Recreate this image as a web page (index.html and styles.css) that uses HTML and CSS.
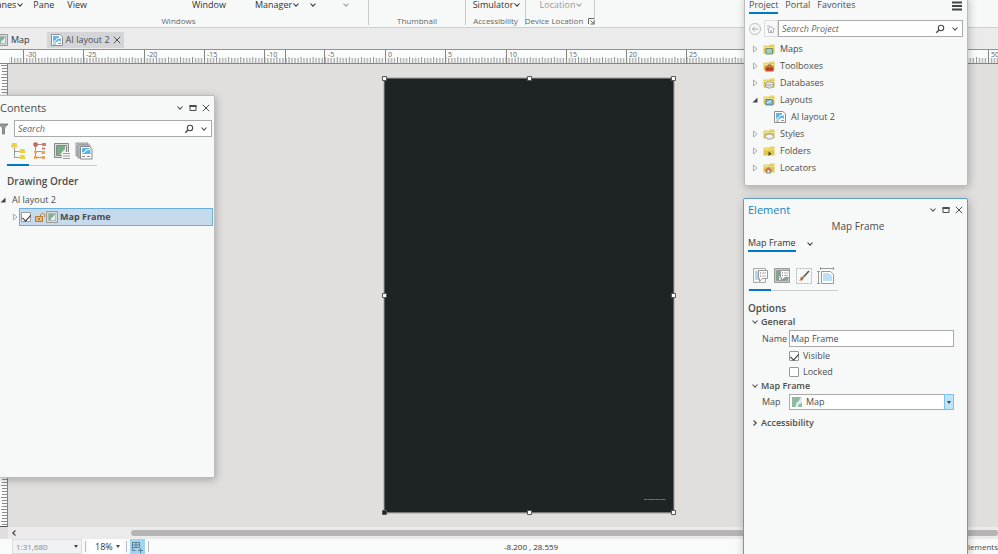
FILE: index.html
```html
<!DOCTYPE html>
<html lang="en">
<head>
<meta charset="utf-8">
<title>AI layout 2</title>
<link rel="stylesheet" href="styles.css">
</head>
<body>
<svg class="defs" aria-hidden="true">
  <defs>
    <symbol id="chev" viewBox="0 0 8 8"><path d="M1.500 2.500 4 5.200 6.500 2.500" fill="none" stroke="currentColor" stroke-width="1.100"/></symbol>
    <symbol id="chev-right" viewBox="0 0 8 8"><path d="M2.500 1.500 5.200 4 2.500 6.500" fill="none" stroke="currentColor" stroke-width="1.200"/></symbol>
    <symbol id="close" viewBox="0 0 8 8"><path d="M.8.800l6.400 6.400M7.200.8.800 7.200" fill="none" stroke="currentColor"/></symbol>
    <symbol id="restore" viewBox="0 0 8 8"><path d="M1 1.500h6v5H1z" fill="none" stroke="currentColor"/><path d="M.5 1h7v2h-7z" fill="currentColor"/></symbol>
    <symbol id="lens" viewBox="0 0 10 10"><circle cx="6" cy="4" r="2.700" fill="none" stroke="currentColor" stroke-width="1.100"/><path d="M4 6 1.300 8.800" stroke="currentColor" stroke-width="1.500"/></symbol>
    <symbol id="tri" viewBox="0 0 6 8"><path d="M1.500 1v6L5 4z" fill="none" stroke="#999" stroke-width=".8"/></symbol>
    <symbol id="tri-open" viewBox="0 0 6 8"><path d="M5.500 1.500v5h-5z" fill="#444"/></symbol>
    <symbol id="map" viewBox="0 0 12 12"><path d="M1 1h10v10H1z" fill="#d9ebf5"/><path d="M1 1h9L8 4.500 6.500 6 5 7.500 4.500 11H1z" fill="#8dbb9b"/><path d="M7.500 8.500 11 7v4H7z" fill="#8cc19a"/></symbol>
    <symbol id="mapframe" viewBox="0 0 12 12"><path d="M.5.5h11v11H.5z" fill="#d5d9d9" stroke="#999"/><path d="M2.500 2.500h7v7h-7z" fill="#e4eff4" stroke="#999" stroke-width=".6"/><path d="M3 3h6L7 6 5 7v2H3z" fill="#7fb290"/></symbol>
    <symbol id="layout" viewBox="0 0 12 12"><path d="M.5.5h8.500l2.500 2.500v8.500H.5z" fill="#fff" stroke="#8d8d8d"/><path d="M2 2h6v2l2 .5V8L8 6.500 5 8.500H2z" fill="#65b5e7"/><path d="M2.500 7.500 5 6.500 6 4.500 9 4" fill="none" stroke="#fff"/><path d="M2 10h3M7 9.500h3" stroke="#999"/></symbol>
    <symbol id="folder" viewBox="0 0 12 12"><path d="M.5 10.500V2.500H6l1-1h4.500v9z" fill="#dfc84f"/><path d="M.5 4.500h11" stroke="#f0e28c"/><path d="M1 3h5l1-1h4" stroke="#f6efad" fill="none" stroke-width=".7"/></symbol>
  </defs>
</svg>

<div class="app">
  <header class="ribbon">
    <section class="group windows">
      <div class="commands">
        <button>Panes<svg><use href="#chev"/></svg></button>
        <button>Pane</button>
        <button class="view">View</button>
        <button class="push">Window</button>
        <button class="push-sm">Manager<svg><use href="#chev"/></svg></button>
        <button aria-label="More"><svg><use href="#chev"/></svg></button>
        <button class="muted last" aria-label="More"><svg><use href="#chev"/></svg></button>
      </div>
      <h2>Windows</h2>
    </section>
    <section class="group thumb"><h2>Thumbnail</h2></section>
    <section class="group access">
      <div class="commands"><button>Simulator<svg><use href="#chev"/></svg></button></div>
      <h2>Accessibility</h2>
    </section>
    <section class="group device">
      <div class="commands"><button class="muted">Location<svg><use href="#chev"/></svg></button></div>
      <h2>Device Location <svg viewBox="0 0 8 8"><path d="M1.500 7V1.500H7M3.500 3.500l3 3M3.500 7H7V3.500" fill="none" stroke="#666"/></svg></h2>
    </section>
  </header>

  <nav class="tabs">
    <a class="tab map-tab" href="#"><svg><use href="#mapframe"/></svg>Map</a>
    <div class="tab active"><svg><use href="#layout"/></svg><a href="#">AI layout 2</a><button aria-label="Close tab"><svg><use href="#close"/></svg></button></div>
  </nav>

  <svg class="ruler-x">
    <defs>
      <pattern id="tx" x="385" width="12.06" height="14" patternUnits="userSpaceOnUse"><path d="M.5 7v6M3.500 8v5M6.500 8v5M9.500 8v5" stroke="#8c8c8c"/></pattern>
    </defs>
    <rect x="9" width="100%" height="14" fill="url(#tx)"/>
    <path d="M23.500 0v14M83.500 0v14M144.500 0v14M204.500 0v14M264.500 0v14M285.500 0v14M324.500 0v14M385.500 0v14M445.500 0v14M506.500 0v14M566.500 0v14M626.500 0v14M686.500 0v14M988.500 0v14" stroke="#858585"/>
    <g><text x="26" y="7">-30</text><text x="86" y="7">-25</text><text x="147" y="7">-20</text><text x="207" y="7">-15</text><text x="267" y="7">-10</text><text x="328" y="7">-5</text><text x="388" y="7">0</text><text x="448" y="7">5</text><text x="509" y="7">10</text><text x="569" y="7">15</text><text x="629" y="7">20</text><text x="689" y="7">25</text><text x="991" y="7">50</text></g>
  </svg>

  <main class="workspace">
    <svg class="ruler-y">
      <defs><pattern id="ty" y="1" width="8" height="12" patternUnits="userSpaceOnUse"><path d="M1 .5h7M2 3.500h5M2 6.500h6M2 9.500h5" stroke="#8c8c8c"/></pattern></defs>
      <rect width="8" height="100%" fill="url(#ty)"/>
    </svg>
    <div class="canvas">
      <svg class="sheet" viewBox="0 0 296 442">
        <path d="M4 4h290v435H4z" fill="#1e2326" stroke="#a0a0a0"/>
        <path d="M4 438.500h290" stroke="#777"/>
        <path d="M264 425.500h22" stroke="#8c9092" stroke-width=".8" stroke-dasharray="3 .6 2 .5"/>
        <g fill="#fff" stroke="#555"><path d="M2.500 2.500h4v4h-4zM147.500 2.500h4v4h-4zM291.500 2.500h4v4h-4zM2.500 219.500h4v4h-4zM291.500 219.500h4v4h-4zM147.500 436.500h4v4h-4zM291.500 436.500h4v4h-4z"/><path d="M2.500 436.500h4v4h-4z" fill="#222"/></g>
      </svg>
    </div>
  </main>

  <div class="scroll"><button aria-label="Scroll left"><svg><use href="#chev-right"/></svg></button><div class="thumb-bar"></div></div>

  <footer class="status">
    <button class="scale">1:31,680<i></i></button>
    <span class="sep"></span>
    <button class="percent">18%<i></i></button>
    <span class="sep"></span>
    <button class="snap" aria-label="Snapping"><svg viewBox="0 0 14 14"><path d="M2.500 2.500h7v5h-7zM6 2.500v5M2.500 5h7M2.500 7.500v3h3M8 10.500h5M10.500 8v5" fill="none" stroke="#63808f"/></svg></button>
    <span class="sep"></span>
    <output>-8.200 , 28.559</output>
    <span class="selected">Elements</span>
  </footer>
</div>

<aside class="panel contents">
  <header><h1>Contents</h1><div class="winbtns"><button aria-label="Menu"><svg><use href="#chev"/></svg></button><button aria-label="Restore"><svg><use href="#restore"/></svg></button><button aria-label="Close"><svg><use href="#close"/></svg></button></div></header>
  <div class="searchrow">
    <svg class="filter" viewBox="0 0 10 12"><path d="M0 1h9L5.500 5v6H3.500V5z" fill="#999" stroke="#666" stroke-width=".7"/></svg>
    <div class="search"><input aria-label="Search" placeholder="Search"><svg class="lens"><use href="#lens"/></svg><svg><use href="#chev"/></svg></div>
  </div>
  <div class="icons">
    <button aria-label="Drawing order"><svg viewBox="0 0 18 18"><path d="M5.500 6v9.500h5M5.500 9.500h5" fill="none" stroke="#999"/><g fill="#e8d247"><path d="M3 1h4.500l1 4.500H2zM11 7h4.500l1 4h-6zM11 13h4.500l1 4h-6z"/></g></svg></button>
    <button aria-label="Element type"><svg viewBox="0 0 18 18"><path d="M4.500 3v12.500h6M4.500 9.500h6M5 2.500h8" fill="none" stroke="#999"/><path d="M3 1h3v3H3z" fill="#d97a6a" stroke="#ba4c3d"/><path d="M11 1h4v3h-4z" fill="#d97a6a"/><path d="M11 5.500h3v2h-3z" fill="#d97a6a"/><path d="M10.500 9h3.500v3h-3.500zM10.500 14h3.500v3h-3.500zM3 9h3v2H3zM3 14h3v3H3z" fill="#e5a768"/></svg></button>
    <button aria-label="Map frames"><svg viewBox="0 0 18 18"><path d="M1.500 1.500h14v14h-14z" fill="#ddd" stroke="#888"/><path d="M3.500 3.500h10v10h-10z" fill="#dcecf4" stroke="#888"/><path d="M4 4h8v3l-3 3-2 3H4z" fill="#76ae88"/><path d="M9 10h9v8H9z" fill="#f7f9f8"/><path d="M10 11.500h7M10 14h7M10 16.500h7" stroke="#999"/></svg></button>
    <button aria-label="Layouts"><svg viewBox="0 0 18 18"><path d="M1 1h12v2H3v11H1z" fill="#ccc" stroke="#888" stroke-width=".8"/><path d="M3 3h12v2H5v11H3z" fill="#ccc" stroke="#888" stroke-width=".8"/><path d="M5.500 4.500h9l2.500 2.500v10H5.500z" fill="#fff" stroke="#888"/><path d="M7 6h7l1.500 1.500V12H7z" fill="#5ab1e8"/><path d="M7 11l3-1 1-2 4-.5" fill="none" stroke="#fff"/><path d="M7 14.500h3M12 14.500h3" stroke="#888"/></svg></button>
  </div>
  <h3>Drawing Order</h3>
  <div class="treeroot"><svg class="tri"><use href="#tri-open"/></svg>AI layout 2</div>
  <div class="treeitem"><svg class="tri"><use href="#tri"/></svg>
    <div class="selrow"><input type="checkbox" id="frame-on" checked><svg class="lock" viewBox="0 0 12 12"><path d="M1.500 5.500h7v5h-7z" fill="#eab877" stroke="#b5793a"/><path d="M6.500 5.500V3.500q2-3 4 0V6" fill="none" stroke="#b87f43"/><path d="M5 7v2" stroke="#704617"/></svg><svg><use href="#mapframe"/></svg><label for="frame-on">Map Frame</label></div>
  </div>
</aside>

<aside class="panel project">
  <nav><a class="on" href="#">Project</a><a href="#">Portal</a><a href="#">Favorites</a><button aria-label="Menu"><svg viewBox="0 0 10 10"><path d="M0 1.500h10M0 5h10M0 8.500h10" stroke="#444" stroke-width="2"/></svg></button></nav>
  <div class="searchrow">
    <button aria-label="Back"><svg viewBox="0 0 12 12"><circle cx="6" cy="6" r="5.500" fill="none" stroke="#bbb"/><path d="M9.500 6h-6M6 3.500 3.500 6 6 8.500" fill="none" stroke="#aaa"/></svg></button>
    <button class="home" aria-label="Home"><svg viewBox="0 0 12 12"><path d="M2 6.500l4-3 4 3M3.500 6v3.500h5V6M2 3h3M5.500 9.500v-2h1v2" fill="none" stroke="#b5b5b5"/></svg></button>
    <div class="search"><input aria-label="Search Project" placeholder="Search Project"><svg class="lens"><use href="#lens"/></svg><svg><use href="#chev"/></svg></div>
  </div>
  <ul>
    <li><svg class="tri"><use href="#tri"/></svg><svg viewBox="0 0 12 12"><use href="#folder"/><path d="M3 5.500h6.500v5.500H3z" fill="#9ed3b1" stroke="#657b70" stroke-width=".8"/></svg>Maps</li>
    <li><svg class="tri"><use href="#tri"/></svg><svg viewBox="0 0 12 12"><use href="#folder"/><path d="M2.500 6.500h8V11.500h-8z" fill="#ce4c31"/><path d="M5 6.500V5h3v1.500M2.500 9h8" fill="none" stroke="#873322" stroke-width=".8"/></svg>Toolboxes</li>
    <li><svg class="tri"><use href="#tri"/></svg><svg viewBox="0 0 12 12"><use href="#folder"/><path d="M2.500 6.500v3.500q4 2.500 8 0V6.500z" fill="#dcdcdc" stroke="#888" stroke-width=".7"/><ellipse cx="6.500" cy="6.500" rx="4" ry="1.500" fill="#eee" stroke="#888" stroke-width=".7"/></svg>Databases</li>
    <li><svg class="tri"><use href="#tri-open"/></svg><svg viewBox="0 0 12 12"><use href="#folder"/><path d="M3 5.500h5l2 1.500v4H3z" fill="#79bce6" stroke="#666" stroke-width=".8"/><path d="M4 9l4-2" stroke="#fff"/></svg>Layouts</li>
    <li class="child"><svg><use href="#layout"/></svg>AI layout 2</li>
    <li><svg class="tri"><use href="#tri"/></svg><svg viewBox="0 0 12 12"><use href="#folder"/><path d="M2 8.500 4.500 6h4L11 8.500 8.500 11h-4z" fill="#f2f2f2" stroke="#888" stroke-width=".8"/></svg>Styles</li>
    <li><svg class="tri"><use href="#tri"/></svg><svg viewBox="0 0 12 12"><use href="#folder"/><path d="M5.500 6.500v4.500l3-2.200z" fill="#444"/></svg>Folders</li>
    <li><svg class="tri"><use href="#tri"/></svg><svg viewBox="0 0 12 12"><use href="#folder"/><path d="M2 8 5.500 5 9 8l-1 2.500H3z" fill="#df674f"/><path d="M4.500 8h2v3h-2z" fill="#eee"/><path d="M3 11h5" stroke="#4ba8a2"/></svg>Locators</li>
  </ul>
</aside>

<aside class="panel element">
  <header><h1>Element</h1><div class="winbtns"><button aria-label="Menu"><svg><use href="#chev"/></svg></button><button aria-label="Restore"><svg><use href="#restore"/></svg></button><button aria-label="Close"><svg><use href="#close"/></svg></button></div></header>
  <p class="subtitle">Map Frame</p>
  <div class="kind"><a href="#">Map Frame</a><svg><use href="#chev"/></svg></div>
  <div class="icons">
    <button aria-label="Options"><svg viewBox="0 0 18 18"><path d="M2.500 1.500h12v14h-12z" fill="#f1f7fa" stroke="#aaa"/><path d="M4 4h4v9H4z" fill="#abd9f3"/><path d="M7.500 3.500h9v8h-5l-3 3v-3h-1z" fill="#fff" stroke="#999"/><path d="M9 6h1M9 9h1" stroke="#7b5b91"/><path d="M11 6h4M11 9h4" stroke="#aaa"/></svg></button>
    <button aria-label="Display"><svg viewBox="0 0 18 18"><path d="M1.500 1.500h15v14h-15z" fill="#c5c8c6" stroke="#999"/><path d="M3.500 3.500h11v10h-11z" fill="#c8e7ef" stroke="#999"/><path d="M4 4h3v4l-1 2v3H4zM9 12l5-2v3H9z" fill="#74ac85"/><path d="M7.500 3.500h9v7h-5l-3 3v-3h-1z" fill="#fff" stroke="#999"/><path d="M9 6h1M9 8.500h1" stroke="#7b5b91"/><path d="M11 6h4M11 8.500h4" stroke="#aaa"/></svg></button>
    <button aria-label="Border"><svg viewBox="0 0 18 18"><path d="M1.500 1.500h15v15h-15z" fill="none" stroke="#b5b5b5" stroke-dasharray="2 1"/><path d="M14 4 8.500 10" stroke="#555" stroke-width="1.500"/><path d="M7.500 9.500l1.500 1.500-2 2.500H4q2-1 1.500-3z" fill="#b36b36"/></svg></button>
    <button aria-label="Placement"><svg viewBox="0 0 18 18"><path d="M3 1.500h14M3.500 0v3M16.500 0v3M1.500 4v13M0 4.500h3M0 16.500h3" stroke="#999"/><path d="M4.500 4.500h9l3 3v9h-12z" fill="#fff" stroke="#999"/><path d="M6 6h6l3 3v5H6z" fill="#bce0f4"/></svg></button>
  </div>
  <h3>Options</h3>
  <h4><svg><use href="#chev"/></svg>General</h4>
  <div class="form">
    <label for="name">Name</label><input id="name" type="text" value="Map Frame">
    <div class="check"><input id="visible" type="checkbox" checked><label for="visible">Visible</label></div>
    <div class="check"><input id="locked" type="checkbox"><label for="locked">Locked</label></div>
  </div>
  <h4><svg><use href="#chev"/></svg>Map Frame</h4>
  <div class="form">
    <label for="mapsel">Map</label>
    <div class="combo"><svg><use href="#map"/></svg><select id="mapsel"><option>Map</option></select><span><i></i></span></div>
  </div>
  <h4 class="closed"><svg><use href="#chev-right"/></svg>Accessibility</h4>
</aside>
</body>
</html>
```
FILE: styles.css
```css
* { box-sizing: border-box; }
body { margin: 0; overflow: hidden; font: 9px/12px "Open Sans", "Noto Sans", sans-serif; color: #4c4c4c; background: #f7f9f8; }
button, input, select { font: inherit; color: inherit; margin: 0; padding: 0; border: 0; background: none; }
button { display: flex; align-items: center; white-space: nowrap; }
a { color: inherit; text-decoration: none; }
h1, h2, h3, h4, p, ul { margin: 0; padding: 0; font-weight: 400; font-size: inherit; }
svg { display: block; flex: none; width: 8px; height: 8px; }
i { width: 0; height: 0; border: 2px solid transparent; border-top: 3px solid #444; border-bottom: 0; }
.defs { position: absolute; width: 0; height: 0; }

.app { display: flex; flex-direction: column; height: 100vh; background: #e0dfde; }

.ribbon { display: flex; height: 28px; background: #f7f9f8; border-bottom: 1px solid #cfcfcf; }
.group { display: flex; flex-direction: column; justify-content: space-between; height: 25px; border-right: 1px solid #c8c8c8; }
.commands { display: flex; align-items: center; height: 10px; line-height: 10px; color: #333; }
.group h2 { display: flex; justify-content: center; align-items: center; gap: 4px; margin-top: auto; font-size: 8px; line-height: 9px; white-space: nowrap; color: #666; }
.windows { width: 369px; }
.windows h2 { padding-right: 11px; }
.windows .commands { gap: 9px; margin-left: -9px; }
.view { margin-left: 4px; }
.push { margin-left: 96px; }
.push-sm { margin-left: 20px; }
.windows .last { margin-left: 16px; }
.thumb { width: 97px; }
.access { width: 60px; }
.device { width: 69px; }
.access .commands, .device .commands { justify-content: center; padding-left: 3px; }
.commands .muted { color: #999; }

.tabs { display: flex; align-items: flex-end; gap: 17px; height: 21px; padding-bottom: 1px; background: #ebebeb; }
.tab { display: flex; align-items: center; gap: 3px; height: 16px; }
.tab > svg { width: 12px; height: 12px; }
.map-tab { margin-left: -4px; color: #333; }
.active { padding: 0 3px 0 4px; background: #d4d5d8; }

.ruler-x { width: 100%; height: 15px; background: #fafbfb; border-top: 1px solid #929292; border-bottom: 1px solid #858585; }
.ruler-x text { font: 7px "Open Sans", sans-serif; fill: #666; }

.workspace { display: flex; flex: 1; min-height: 0; }
.ruler-y { width: 8px; height: 100%; background: #fafbfb; border-right: 1px solid #858585; border-bottom: 1px solid #555; }
.canvas { position: relative; flex: 1; overflow: hidden; }
.sheet { position: absolute; left: 372px; top: 10px; width: 296px; height: 442px; }

.scroll { display: flex; align-items: center; height: 12px; margin-left: 8px; background: #ebebeb; }
.scroll button { width: 123px; padding-left: 2px; }
.scroll button svg { transform: scaleX(-1); }
.thumb-bar { flex: 1; height: 6px; border-radius: 3px; background: #b4b4b4; }

.status { display: flex; align-items: center; gap: 3px; height: 15px; padding-left: 12px; background: #f9fafa; }
.status button { height: 15px; justify-content: space-between; }
.status .scale { width: 70px; padding: 0 3px; font-size: 8px; background: #f1f2f3; border: 1px solid #ddd; color: #888; }
.status .percent { width: 34px; padding: 0 3px 0 6px; background: #fff; color: #333; }
.sep { width: 1px; height: 11px; background: #bbb; }
.snap { width: 15px; background: #9fd5f3; }
.snap svg { width: 14px; height: 14px; }
.status output { flex: 1; padding-left: 352px; font-size: 8px; color: #333; }
.selected { font-size: 8px; }

.panel { position: absolute; background: #f7f9f8; border: 1px solid #bcbcbc; border-radius: 2px; box-shadow: 1px 2px 8px rgba(0, 0, 0, .25); }
.panel header { display: flex; justify-content: space-between; align-items: center; }
.panel h1 { font-size: 11px; line-height: 14px; }
.winbtns { display: flex; gap: 5px; }
.searchrow { display: flex; align-items: center; }
.search { display: flex; flex: 1; align-items: center; gap: 6px; height: 17px; padding: 0 3px; border: 1px solid #aaa; background: #fff; }
.search input { flex: 1; min-width: 0; outline: 0; font-style: italic; }
.search input::placeholder { color: #666; opacity: 1; }
.lens { width: 10px; height: 10px; }
.icons { display: flex; width: 90px; border-bottom: 1px solid #ccc; }
.icons button { justify-content: center; width: 22px; height: 27px; padding-bottom: 1px; }
.icons button:first-child { box-shadow: 0 1px #0078c8, inset 0 -1px #0078c8; }
.icons svg { width: 18px; height: 18px; }
.panel h3 { font-size: 10px; line-height: 14px; font-weight: 600; }

input[type="checkbox"] { appearance: none; width: 10px; height: 10px; border: 1px solid #999; border-radius: 1px; background: #fff; display: grid; place-items: center; }
input[type="checkbox"]:checked::before { content: ""; width: 4px; height: 7px; border: solid #333; border-width: 0 1px 1px 0; transform: rotate(42deg); }

.contents { left: -2px; top: 95px; width: 217px; height: 383px; padding: 5px 2px 0 1px; }
.contents header { padding-right: 2px; }
.contents .searchrow { gap: 5px; margin-top: 5px; margin-left: -1px; }
.filter { width: 10px; height: 12px; }
.contents .icons { margin: 1px 0 0 7px; }
.contents h3 { margin: 8px 0 0 7px; }
.treeroot { display: flex; align-items: center; gap: 6px; margin-top: 6px; height: 12px; }
.contents .tri { width: 6px; }
.treeitem { display: flex; align-items: center; gap: 1px; margin: 2px -1px 0 12px; }
.selrow { display: flex; flex: 1; align-items: center; gap: 2px; height: 18px; padding-left: 1px; background: #c5dbed; border: 1px solid #69b1dc; font-weight: 700; }
.selrow svg { width: 12px; height: 12px; }
.selrow .lock { margin-right: -2px; margin-left: 1px; }

.project { right: 30px; top: -4px; width: 224px; height: 190px; padding: 2px 4px 0; }
.project nav { display: flex; align-items: flex-start; gap: 7px; height: 21px; }
.project nav a { height: 15px; line-height: 12px; }
.project nav .on { border-bottom: 2px solid #0078c8; }
.project nav button { margin: 2px 1px 0 auto; }
.project nav svg { width: 10px; height: 10px; }
.project .searchrow { gap: 3px; }
.project .searchrow button svg { width: 12px; height: 12px; }
.home { height: 17px; border: 1px solid #ddd; }
.home + .search { margin-left: -3px; }
.project ul { margin-top: 3px; list-style: none; }
.project li { display: flex; align-items: center; gap: 5px; height: 17px; padding-left: 3px; }
.project li svg { width: 12px; height: 12px; }
.project li .tri { width: 6px; height: 8px; }
.project .child { padding-left: 25px; }

.element { right: 30px; top: 198px; bottom: -4px; width: 225px; padding: 4px 4px 0; border: 1px solid #5f9fc6; }
.element h1 { color: #1583c9; }
.subtitle { margin-top: 2px; padding-left: 5px; font-size: 10px; line-height: 15px; text-align: center; }
.kind { display: flex; align-items: center; gap: 10px; margin-top: 2px; color: #333; }
.kind a { border-bottom: 2px solid #0078c8; line-height: 14px; }
.element .icons { margin-top: 11px; padding-left: 1px; }
.element h3 { margin-top: 10px; }
.element h4 { display: flex; align-items: center; gap: 2px; height: 14px; padding-left: 3px; font-weight: 600; }
.form { display: grid; grid-template-columns: 27px 1fr; align-items: center; row-gap: 1px; padding: 1px 9px 0 14px; }
.form input[type="text"] { height: 17px; padding-left: 1px; border: 1px solid #aaa; background: #fff; width: 100%; }
.check { display: flex; grid-column: 2; align-items: center; gap: 4px; height: 15px; }
.combo { display: flex; align-items: center; height: 16px; border: 1px solid #aaa; background: #fff; }
.combo svg { width: 12px; height: 12px; margin: 0 3px 0 1px; }
.combo select { flex: 1; appearance: none; }
.combo span { display: grid; place-items: center; width: 10px; height: 16px; margin-right: -1px; background: #bfe3f8; border: 1px solid #7dc0e8; }
.element .closed { margin-top: 6px; }
```
